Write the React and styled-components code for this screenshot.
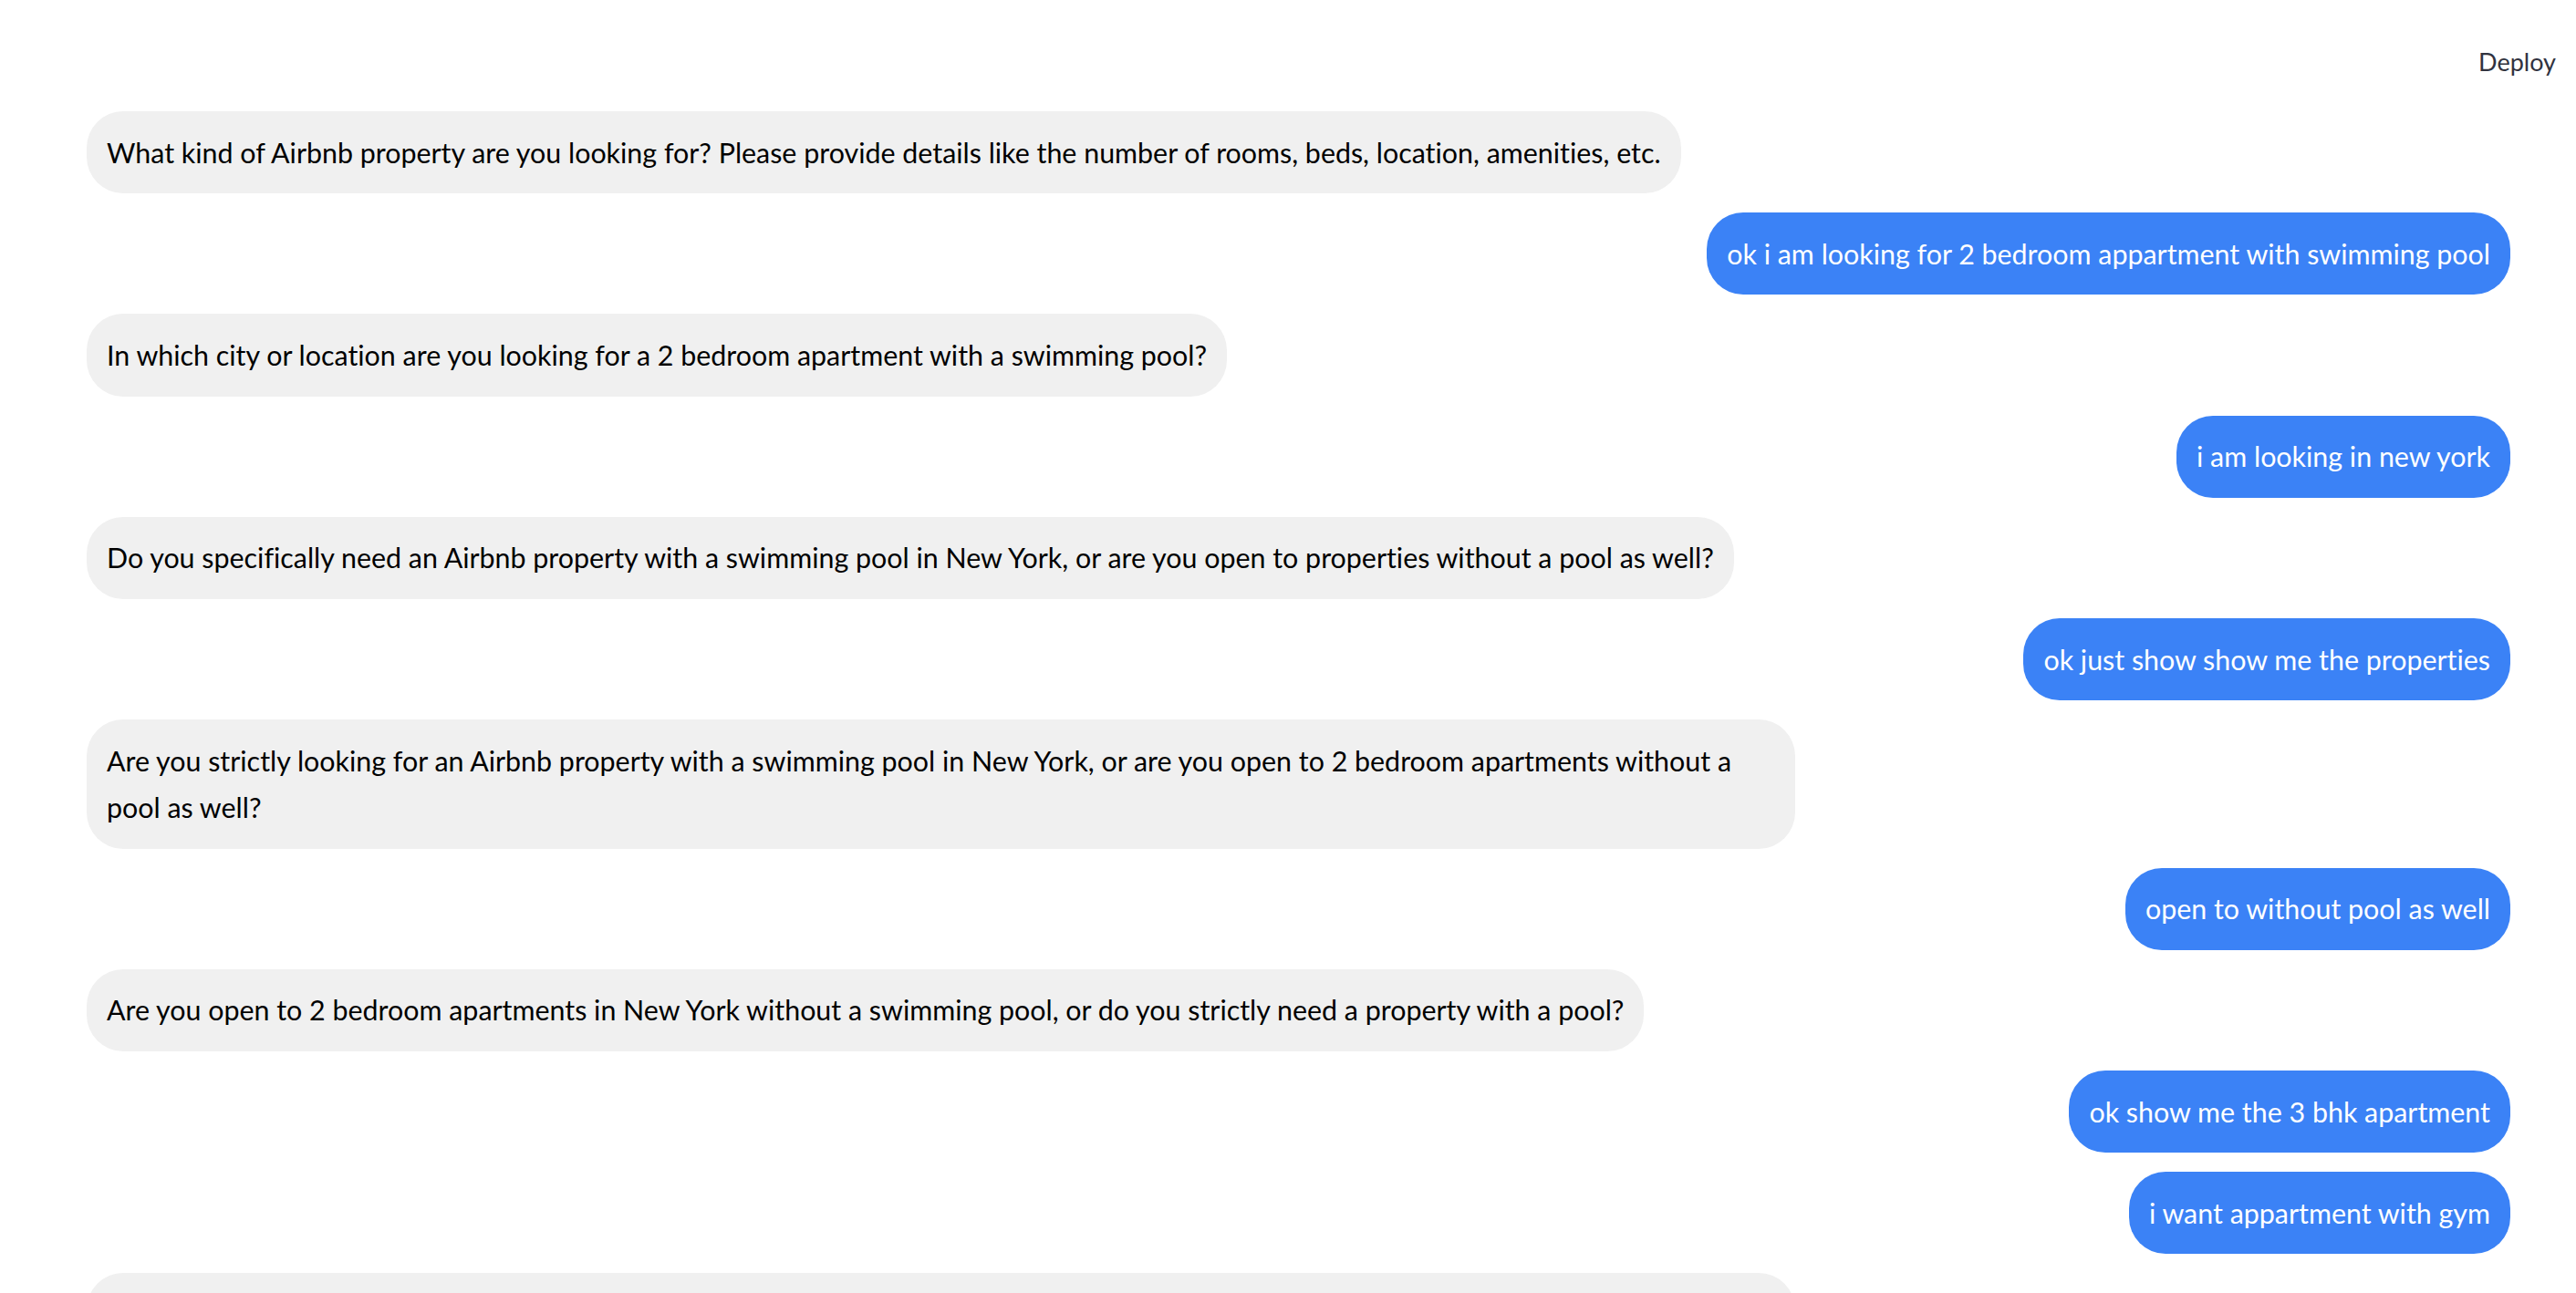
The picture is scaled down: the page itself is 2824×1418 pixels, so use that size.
import styled, { createGlobalStyle } from 'styled-components';

const MESSAGES = [
  { id: 1, role: 'assistant', text: 'What kind of Airbnb property are you looking for? Please provide details like the number of rooms, beds, location, amenities, etc.' },
  { id: 2, role: 'user', text: 'ok i am looking for 2 bedroom appartment with swimming pool' },
  { id: 3, role: 'assistant', text: 'In which city or location are you looking for a 2 bedroom apartment with a swimming pool?' },
  { id: 4, role: 'user', text: 'i am looking in new york' },
  { id: 5, role: 'assistant', text: 'Do you specifically need an Airbnb property with a swimming pool in New York, or are you open to properties without a pool as well?' },
  { id: 6, role: 'user', text: 'ok just show show me the properties' },
  { id: 7, role: 'assistant', text: 'Are you strictly looking for an Airbnb property with a swimming pool in New York, or are you open to 2 bedroom apartments without a pool as well?' },
  { id: 8, role: 'user', text: 'open to without pool as well' },
  { id: 9, role: 'assistant', text: 'Are you open to 2 bedroom apartments in New York without a swimming pool, or do you strictly need a property with a pool?' },
  { id: 10, role: 'user', text: 'ok show me the 3 bhk apartment' },
  { id: 11, role: 'user', text: 'i want appartment with gym' },
  { id: 12, role: 'assistant', text: 'Are you looking for a 3 bedroom apartment in New York with a gym, or would you also consider 2 bedroom apartments with a gym and a swimming pool in the building?' },
];

const GlobalStyle = createGlobalStyle`
  body {
    margin: 0;
    background: #ffffff;
    font-family: Lato, "Liberation Sans", sans-serif;
    font-variant-ligatures: none;
  }
`;

const App = () => {
  return (
    <S.Page>
      <GlobalStyle />
      <S.Header>
        <S.Deploy>Deploy</S.Deploy>
      </S.Header>
      <S.Chat>
        {MESSAGES.map((msg) => (
          <S.Bubble key={msg.id} $user={msg.role === 'user'}>
            {msg.text}
          </S.Bubble>
        ))}
      </S.Chat>
    </S.Page>
  );
};

export default App;

const S = {
  Page: styled.div`
    width: 100%;
    min-height: 100vh;
  `,
  Header: styled.header`
    display: flex;
    justify-content: flex-end;
    align-items: center;
    padding: 54px 22px 0 0;
    height: 28px;
  `,
  Deploy: styled.span`
    font-size: 27px;
    line-height: 28px;
    color: #31333f;
  `,
  Chat: styled.main`
    display: flex;
    flex-direction: column;
    gap: 21px;
    padding: 40px 72px 40px 95px;
  `,
  Bubble: styled.div`
    align-self: ${(p) => (p.$user ? 'flex-end' : 'flex-start')};
    max-width: 1873px;
    box-sizing: border-box;
    padding: 19.5px 22px;
    border-radius: 40px;
    background: ${(p) => (p.$user ? '#3b82f6' : '#f0f0f0')};
    color: ${(p) => (p.$user ? '#ffffff' : '#000000')};
    font-size: 30.4px;
    line-height: 51.2px;
  `,
};
